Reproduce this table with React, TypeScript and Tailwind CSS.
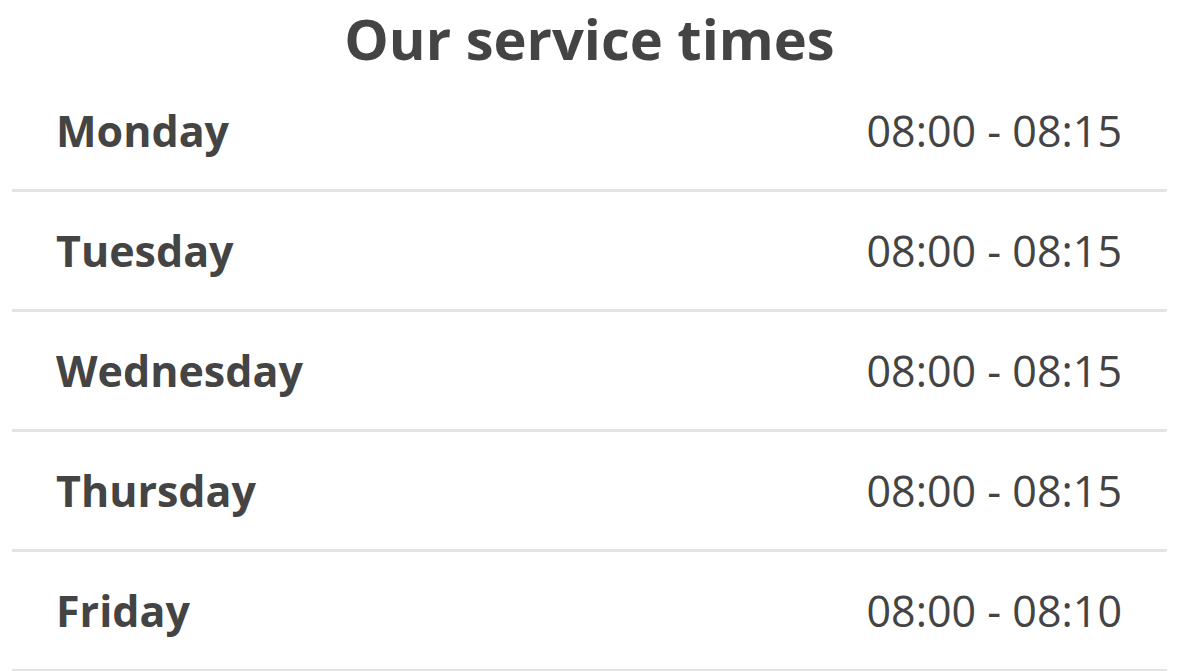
const hours = [
  { day: "Monday", time: "08:00 - 08:15" },
  { day: "Tuesday", time: "08:00 - 08:15" },
  { day: "Wednesday", time: "08:00 - 08:15" },
  { day: "Thursday", time: "08:00 - 08:15" },
  { day: "Friday", time: "08:00 - 08:10" },
];

const App = () => {
  return (
    <div className="min-h-screen bg-white text-[#444444] font-['Open_Sans',sans-serif]">
      <h2 className="h-[72px] pt-[5px] text-center text-[56px] font-bold leading-[67px]">
        Our service times
      </h2>
      <div className="px-[12px]">
        {hours.map((item) => (
          <div
            key={item.day}
            className="h-[120px] flex items-center justify-between pl-[44px] pr-[45px] border-b-[3px] border-[#e4e4e4]"
          >
            <span className="text-[43px] font-bold leading-[60px]">{item.day}</span>
            <span className="text-[43px] leading-[60px]">{item.time}</span>
          </div>
        ))}
      </div>
    </div>
  );
};

export default App;
